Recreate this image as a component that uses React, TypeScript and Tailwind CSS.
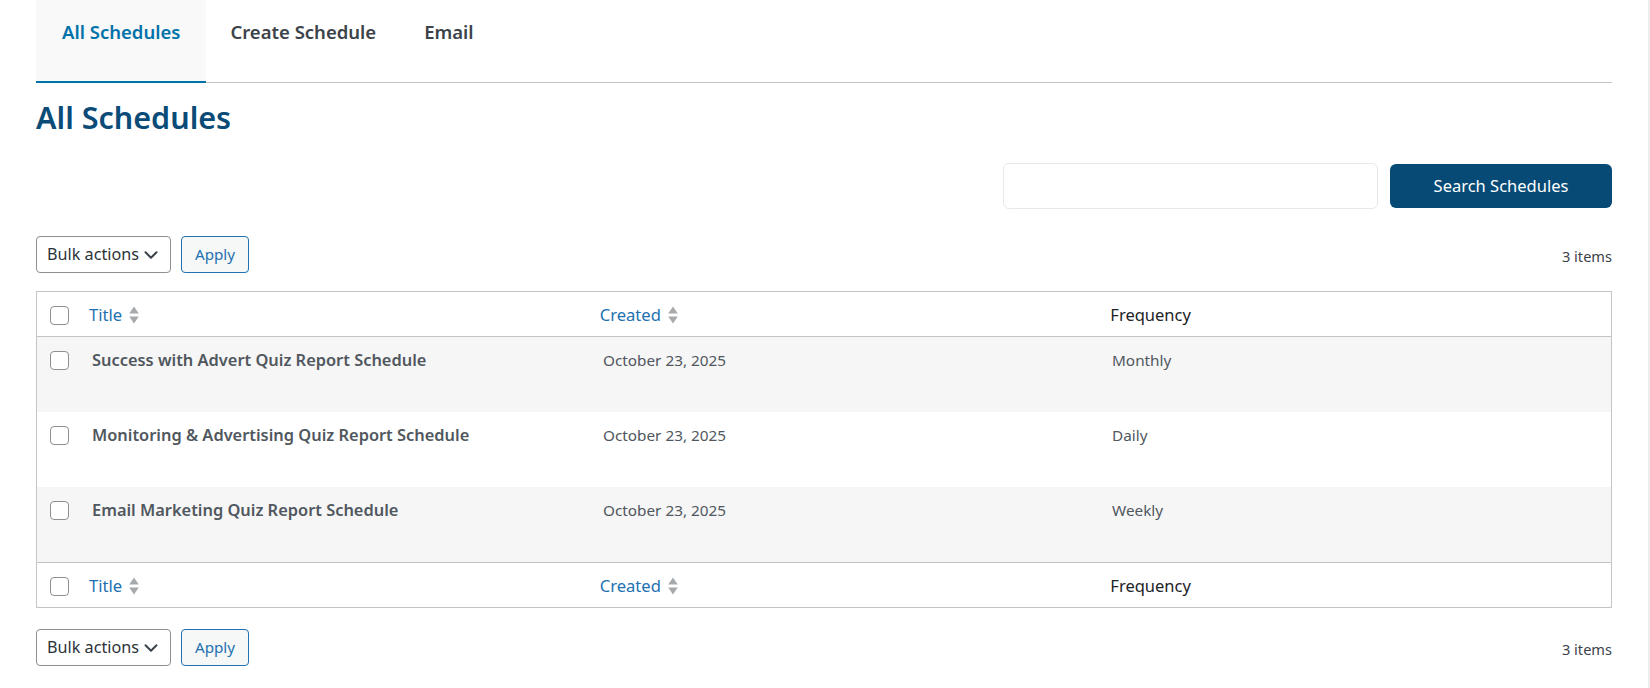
import { ChevronDown } from "lucide-react";

const rows = [
  { title: "Success with Advert Quiz Report Schedule", created: "October 23, 2025", freq: "Monthly" },
  { title: "Monitoring & Advertising Quiz Report Schedule", created: "October 23, 2025", freq: "Daily" },
  { title: "Email Marketing Quiz Report Schedule", created: "October 23, 2025", freq: "Weekly" },
];

const font = { fontFamily: '"Noto Sans", "Open Sans", sans-serif' };

const Checkbox = () => (
  <span className="block w-[19px] h-[19px] rounded-[4px] border border-[#8c8f94] bg-white" />
);

// up / down sort triangles
const SortArrows = () => (
  <svg width="10" height="18" viewBox="0 0 10 18" className="ml-[7px] shrink-0">
    <path d="M5 0.5 L9.8 7.5 H0.2 Z" fill="#a7aaad" />
    <path d="M5 17.5 L9.8 10.5 H0.2 Z" fill="#a7aaad" />
  </svg>
);

const Tablenav = () => (
  <div className="flex items-center justify-between">
    <div className="flex items-center gap-[10px]">
      <div className="flex items-center justify-between w-[135px] h-[37px] pl-[10px] pr-[8px] border border-[#8c8f94] rounded-[4px] text-[16.2px] text-[#2c3338] bg-white">
        <span>Bulk actions</span>
        <ChevronDown size={22} strokeWidth={2.2} className="text-[#3c434a]" />
      </div>
      <button className="h-[37px] w-[68px] border border-[#2271b1] rounded-[4px] bg-[#f6f7f7] text-[#2271b1] text-[15.2px]">
        Apply
      </button>
    </div>
    <span className="pt-1 text-[14.6px] text-[#3c434a]">3 items</span>
  </div>
);

const HeaderRow = ({ top }: { top?: boolean }) => (
  <div className={`flex items-center h-[45px] pt-[2px] bg-white ${top ? "border-b" : "border-t"} border-[#c3c4c7]`}>
    <div className="w-[42px] pl-[13px] flex items-center">
      <Checkbox />
    </div>
    <div className="flex-1 pl-[10px] flex items-center text-[16.6px] text-[#2271b1]">
      Title <SortArrows />
    </div>
    <div className="flex-1 pl-[10px] flex items-center text-[16.6px] text-[#2271b1]">
      Created <SortArrows />
    </div>
    <div className="flex-1 pl-[10px] text-[16.5px] text-[#1d2327]">Frequency</div>
  </div>
);

export default function App() {
  return (
    <div className="min-h-screen bg-white pl-[36px] pr-[36px] border-r-2 border-[#ededed]" style={font}>
      {/* Tabs */}
      <div className="flex border-b border-[#c3c4c7] h-[83px]">
        <div className="h-[83px] px-[26px] pt-[19px] leading-[26px] bg-[#f9f9f9] border-b-2 border-[#0073aa] text-[18.5px] font-semibold text-[#0073aa] -mb-px">
          All Schedules
        </div>
        <div className="px-[24px] pt-[19px] leading-[26px] text-[18.5px] font-semibold text-[#3c434a]">Create Schedule</div>
        <div className="px-[24px] pt-[19px] leading-[26px] text-[18.5px] font-semibold text-[#3c434a]">Email</div>
      </div>

      <h1 className="mt-[14px] text-[30.5px] leading-10 font-semibold text-[#0a4b78]">All Schedules</h1>

      {/* Search */}
      <div className="flex justify-end items-start gap-3 mt-[26px]">
        <input className="w-[375px] h-[46px] border border-[#e8e8e8] rounded-[6px] bg-white" />
        <button className="w-[222px] h-[44px] mt-px rounded-[6px] bg-[#074a75] text-white text-[16.5px]">
          Search Schedules
        </button>
      </div>

      <div className="mt-[27px]">
        <Tablenav />
      </div>

      {/* Table */}
      <div className="mt-[18px] border border-[#c3c4c7]">
        <HeaderRow top />
        {rows.map((r, i) => (
          <div key={r.title} className={`flex items-start h-[75px] ${i % 2 === 0 ? "bg-[#f6f6f6]" : "bg-white"}`}>
            <div className="w-[42px] pl-[13px] pt-[14px]">
              <Checkbox />
            </div>
            <div className="flex-1 pl-[13px] pt-[12px] leading-[22px] text-[16.4px] font-semibold text-[#50575e]">{r.title}</div>
            <div className="flex-1 pl-[12px] pt-[12px] leading-[22px] text-[15.3px] text-[#50575e]">{r.created}</div>
            <div className="flex-1 pl-[10px] pt-[12px] leading-[22px] text-[15.3px] text-[#50575e]">{r.freq}</div>
          </div>
        ))}
        <HeaderRow />
      </div>

      <div className="mt-[21px]">
        <Tablenav />
      </div>
    </div>
  );
}
